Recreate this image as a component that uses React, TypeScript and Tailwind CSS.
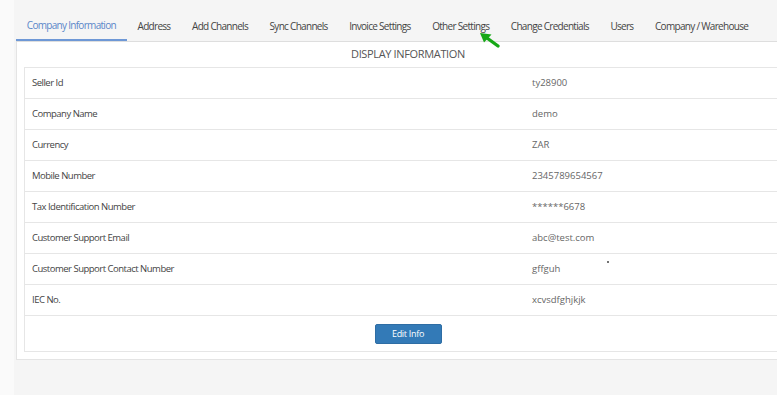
import React from 'react';

const TABS = [
  'Company Information',
  'Address',
  'Add Channels',
  'Sync Channels',
  'Invoice Settings',
  'Other Settings',
  'Change Credentials',
  'Users',
  'Company / Warehouse',
];

const ROWS: [string, string][] = [
  ['Seller Id', 'ty28900'],
  ['Company Name', 'demo'],
  ['Currency', 'ZAR'],
  ['Mobile Number', '2345789654567'],
  ['Tax Identification Number', '******6678'],
  ['Customer Support Email', 'abc@test.com'],
  ['Customer Support Contact Number', 'gffguh'],
  ['IEC No.', 'xcvsdfghjkjk'],
];

export default function App() {
  return (
    <div
      className="flex w-[777px] h-[395px] overflow-hidden bg-[#f5f5f5]"
      style={{ fontFamily: '"Open Sans", "Noto Sans", sans-serif' }}
    >
      {/* left strip */}
      <div className="w-[14px] shrink-0 bg-[#fafafa]" />

      <div className="pl-[2px] pt-[11px] shrink-0">
        {/* Tabs */}
        <div className="relative flex w-[784px] border-b border-[#dedede]">
          {TABS.map((t, i) => (
            <div
              key={t}
              className={
                i === 0
                  ? 'shrink-0 whitespace-nowrap px-[10.8px] h-[30px] flex items-center text-[10px] tracking-[-0.7px] text-[#5b87c9] border-b-2 border-[#6e98d6] -mb-px'
                  : 'shrink-0 whitespace-nowrap px-[10.8px] h-[30px] flex items-center text-[10px] tracking-[-0.7px] text-[#444]'
              }
            >
              {t}
            </div>
          ))}
          {/* green arrow pointing at Other Settings */}
          <svg
            className="absolute left-[461px] top-[19px]"
            width="24"
            height="20"
            viewBox="0 0 24 20"
          >
            <path d="M21 16 L10 8" stroke="#17a817" strokeWidth="3.4" strokeLinecap="round" />
            <path d="M3 3 L14.5 4.5 L7 12.5 Z" fill="#17a817" />
          </svg>
        </div>

        {/* Panel */}
        <div className="w-[784px] bg-white border border-t-0 border-[#e4e4e4] px-[7px] pb-[7px]">
          <div className="h-[25px] flex items-center justify-center text-[11px] tracking-[-0.35px] text-[#555]">
            DISPLAY INFORMATION
          </div>
          <div className="border border-[#e6e6e6]">
            {ROWS.map(([label, value], i) => (
              <div
                key={label}
                className="flex h-[31px] items-center border-b border-[#e6e6e6]"
              >
                <div className="w-[501px] pl-[7px] text-[9.5px] tracking-[-0.5px] text-[#444]">{label}</div>
                <div className="relative pl-[6px] text-[9.5px] text-[#666]">
                  {value}
                  {i === 6 && (
                    <span className="absolute left-[81px] top-[-1px] w-[2px] h-[2px] bg-[#444] rounded-full" />
                  )}
                </div>
              </div>
            ))}
            <div className="h-[35px] flex items-center justify-center">
              <button className="w-[67px] h-[20px] rounded-[2px] bg-[#337ab7] border border-[#2e6da4] text-white text-[9px] tracking-[-0.3px]">
                Edit Info
              </button>
            </div>
          </div>
        </div>
      </div>
    </div>
  );
}
